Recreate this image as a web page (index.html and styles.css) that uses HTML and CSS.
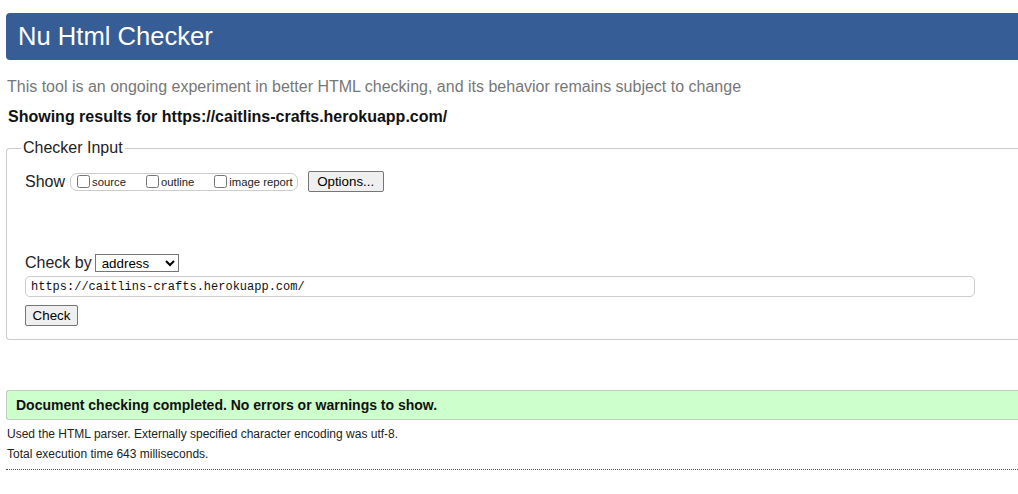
FILE: index.html
```html
<!DOCTYPE html>
<html lang="en">
<head>
<meta charset="utf-8">
<title>Nu Html Checker</title>
<link rel="stylesheet" href="styles.css">
</head>
<body>
<div class="page">
  <h1 class="title">Nu Html Checker</h1>
  <p class="subtitle">This tool is an ongoing experiment in better HTML checking, and its behavior remains subject to change</p>
  <p class="showing">Showing results for https://caitlins-crafts.herokuapp.com/</p>

  <fieldset class="input-box">
    <legend class="legend">Checker Input</legend>
    <div class="show-row">
      <span class="show-label">Show</span>
      <span class="show-group">
        <label class="opt"><input type="checkbox" class="cb">source</label>
        <label class="opt"><input type="checkbox" class="cb">outline</label>
        <label class="opt last"><input type="checkbox" class="cb">image report</label>
      </span>
      <button class="btn options">Options...</button>
    </div>
    <div class="checkby-row">
      <span class="checkby-label">Check by</span>
      <select class="select"><option>address</option></select>
    </div>
    <input class="url" type="text" value="https://caitlins-crafts.herokuapp.com/">
    <div class="check-row"><button class="btn check">Check</button></div>
  </fieldset>

  <div class="success">Document checking completed. No errors or warnings to show.</div>
  <p class="details first">Used the HTML parser. Externally specified character encoding was utf-8.</p>
  <p class="details">Total execution time 643 milliseconds.</p>
  <div class="rule"></div>
</div>
</body>
</html>
```

FILE: styles.css
```css
html, body {
  margin: 0;
  padding: 0;
  background: #fff;
  overflow: hidden;
}
body {
  font-family: "Liberation Sans", Arial, sans-serif;
  color: #000;
  padding-top: 13px;
}
.page {
  padding-left: 6px;
}
.title {
  margin: 0;
  height: 47px;
  line-height: 47px;
  background: #365d95;
  color: #fff;
  font-weight: normal;
  font-size: 25.6px;
  padding-left: 12px;
  border-radius: 4px 0 0 4px;
}
.subtitle {
  margin: 17px 0 0 1px;
  font-size: 16px;
  line-height: 20px;
  color: #777;
}
.showing {
  margin: 10px 0 0 2px;
  font-size: 16px;
  line-height: 20px;
  font-weight: bold;
  color: #111;
}
.input-box {
  margin: 12px 0 0 0;
  padding: 0 0 13px 14px;
  border: 1px solid #ccc;
  border-right: none;
  border-radius: 4px 0 0 4px;
}
.legend {
  padding: 0 2px;
  font-size: 16px;
  line-height: 18px;
  color: #222;
}
.show-row {
  display: flex;
  align-items: center;
  margin: 14px 0 0 4px;
  height: 21px;
}
.show-label {
  font-size: 16px;
  color: #222;
  margin-right: 5px;
}
.show-group {
  display: inline-flex;
  align-items: center;
  height: 16px;
  border: 1px solid #ccc;
  border-radius: 7px;
  padding: 0 4px 0 6px;
}
.opt {
  display: inline-flex;
  align-items: center;
  font-size: 11.3px;
  color: #222;
  margin-right: 20px;
}
.opt.last {
  margin-right: 0;
}
.cb {
  width: 13px;
  height: 13px;
  margin: 0 2px 0 0;
}
.btn {
  font-family: "Liberation Sans", Arial, sans-serif;
  font-size: 13.33px;
  background: #efefef;
  border: 1px solid #767676;
  border-radius: 2px;
  color: #000;
  padding: 1px 6px;
  height: 21px;
}
.options {
  margin-left: 10px;
  width: 76px;
}
.checkby-row {
  display: flex;
  align-items: center;
  margin: 61px 0 0 4px;
  height: 19px;
}
.checkby-label {
  font-size: 16px;
  color: #222;
  margin-right: 3px;
}
.select {
  font-family: "Liberation Sans", Arial, sans-serif;
  font-size: 13.33px;
  width: 84px;
  height: 18px;
  border: 1px solid #767676;
  border-radius: 0;
  padding: 0 0 0 2px;
  background: #fff;
  color: #000;
}
.url {
  display: block;
  box-sizing: border-box;
  margin: 4px 0 0 4px;
  width: 950px;
  height: 21px;
  border: 1px solid #ccc;
  border-radius: 5px;
  padding: 0 5px;
  font-family: "Liberation Mono", "Courier New", monospace;
  font-size: 12px;
  color: #111;
  outline: none;
}
.check-row {
  margin: 8px 0 0 4px;
}
.check {
  width: 53px;
}
.success {
  margin-top: 50px;
  height: 28px;
  line-height: 28px;
  background: #ccffcc;
  border: 1px solid #bcd0bc;
  border-right: none;
  border-radius: 3px 0 0 3px;
  padding-left: 9px;
  font-size: 14px;
  font-weight: bold;
  color: #111;
}
.details {
  margin: 0 0 0 1px;
  font-size: 12px;
  line-height: 20px;
  color: #222;
}
.details.first {
  margin-top: 4px;
}
.rule {
  margin-top: 5px;
  border-top: 1px dotted #555;
}
```
